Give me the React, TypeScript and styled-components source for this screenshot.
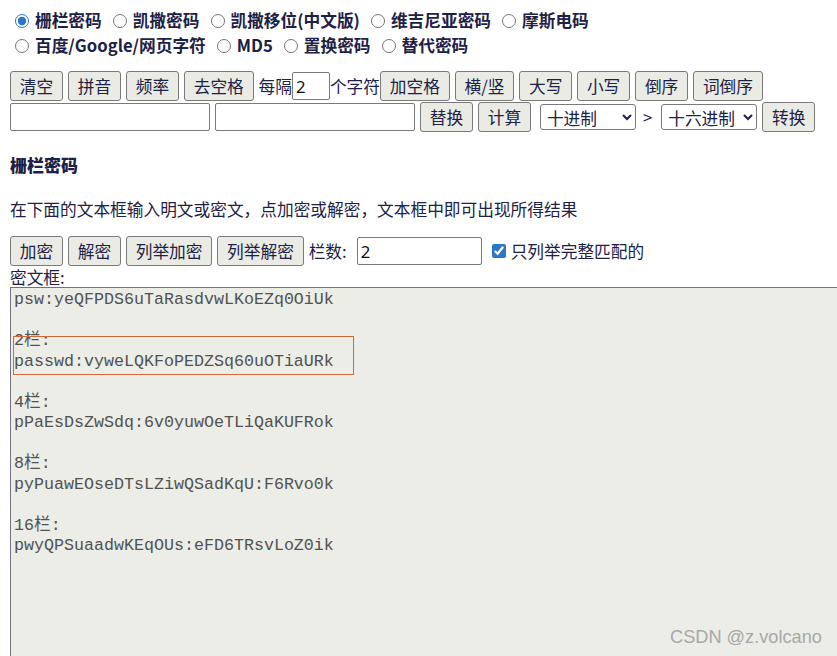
import React, { useState } from 'react';
import styled, { createGlobalStyle } from 'styled-components';

const GlobalStyle = createGlobalStyle`
  html, body {
    margin: 0;
    padding: 0;
    overflow: hidden;
    background: #ffffff;
  }
  body {
    font-family: "Noto Sans CJK SC", "Noto Sans", sans-serif;
    font-size: 16.7px;
    color: #1d2145;
  }
`;

const Page = styled.div`
  padding: 8px 0 0 10px;
  width: 880px;
`;

const RadioGroup = styled.div`
  display: flex;
  flex-wrap: wrap;
  width: 640px;
  line-height: 25px;
`;

const RadioLabel = styled.label`
  display: inline-flex;
  align-items: center;
  font-weight: bold;
  margin-right: 6px;
  white-space: nowrap;
  input {
    margin: 0 6px 0 5px;
    width: 14px;
    height: 14px;
    accent-color: #2a76c9;
  }
`;

const Toolbar = styled.div<{ $top: number }>`
  display: flex;
  align-items: center;
  gap: 5px;
  margin-top: ${(p) => p.$top}px;
  height: 30px;
`;

const Button = styled.button`
  height: 30px;
  padding: 0 8.8px;
  border: 1px solid #7a7a7a;
  border-radius: 3px;
  background: #e9ebe4;
  color: #1d2145;
  font-family: inherit;
  font-size: 16.7px;
  line-height: 1;
  white-space: nowrap;
  cursor: pointer;
`;

const Group = styled.span<{ $left?: number }>`
  display: inline-flex;
  align-items: center;
  white-space: nowrap;
  margin-left: ${(p) => p.$left ?? 0}px;
`;

const TextInput = styled.input<{ $w: number }>`
  box-sizing: border-box;
  width: ${(p) => p.$w}px;
  height: 28px;
  padding: 0 3px;
  border: 1px solid #7a7a7a;
  border-radius: 2px;
  font-family: "Noto Sans", "Noto Sans CJK SC", sans-serif;
  font-size: 16.7px;
  color: #111;
  background: #fff;
`;

const Select = styled.select`
  box-sizing: border-box;
  width: 96px;
  height: 26px;
  border: 1px solid #7a7a7a;
  border-radius: 3px;
  font-family: inherit;
  font-size: 16.7px;
  color: #1d2145;
  background: #fff;
  padding: 0 2px;
`;

const Arrow = styled.span`
  margin: 0 9px 0 7px;
`;

const Heading = styled.h3`
  margin: 21px 0 0;
  font-size: 17px;
  line-height: 24px;
  font-weight: 900;
`;

const Para = styled.p`
  margin: 20px 0 0;
  line-height: 24px;
`;

const Caption = styled.span`
  padding-right: 5px;
`;

const CheckLabel = styled.label`
  display: inline-flex;
  align-items: center;
  white-space: nowrap;
  input {
    margin: 0 5px 0 5px;
    width: 14px;
    height: 14px;
    accent-color: #2a76c9;
  }
`;

const FieldLabel = styled.div`
  margin-top: 1px;
  line-height: 20px;
`;

const Output = styled.div`
  position: relative;
  box-sizing: border-box;
  width: 870px;
  height: 400px;
  border: 1px solid #7a6f7e;
  background: #ebede6;
  padding: 2px 3px;
  font-family: "Liberation Mono", "Noto Sans CJK SC", monospace;
  font-size: 16.67px;
  line-height: 20.5px;
  color: #525252;
  white-space: pre;
`;

const Highlight = styled.div`
  position: absolute;
  left: 2px;
  top: 48px;
  width: 341px;
  height: 39px;
  box-sizing: border-box;
  border: 1px solid #d4683c;
  pointer-events: none;
`;

const Watermark = styled.div`
  position: absolute;
  left: 659px;
  top: 339px;
  font-family: "Liberation Sans", "Noto Sans", sans-serif;
  font-size: 18.2px;
  color: #a8a8a8;
  white-space: nowrap;
`;

const ciphers = [
  '栅栏密码',
  '凯撒密码',
  '凯撒移位(中文版)',
  '维吉尼亚密码',
  '摩斯电码',
  '百度/Google/网页字符',
  'MD5',
  '置换密码',
  '替代密码',
];

const result = [
  'psw:yeQFPDS6uTaRasdvwLKoEZq0OiUk',
  '',
  '2栏:',
  'passwd:vyweLQKFoPEDZSq60uOTiaURk',
  '',
  '4栏:',
  'pPaEsDsZwSdq:6v0yuwOeTLiQaKUFRok',
  '',
  '8栏:',
  'pyPuawEOseDTsLZiwQSadKqU:F6Rvo0k',
  '',
  '16栏:',
  'pwyQPSuaadwKEqOUs:eFD6TRsvLoZ0ik',
].join('\n');

export default function App(): React.ReactElement {
  const [cipher, setCipher] = useState('栅栏密码');
  const [onlyFull, setOnlyFull] = useState(true);

  return (
    <>
      <GlobalStyle />
      <Page>
        <RadioGroup>
          {ciphers.map((c) => (
            <RadioLabel key={c}>
              <input
                type="radio"
                name="cipher"
                checked={cipher === c}
                onChange={() => setCipher(c)}
              />
              {c}
            </RadioLabel>
          ))}
        </RadioGroup>

        <Toolbar $top={13}>
          <Button>清空</Button>
          <Button>拼音</Button>
          <Button>频率</Button>
          <Button>去空格</Button>
          <Group>
            每隔
            <TextInput $w={38} defaultValue="2" />
            个字符
            <Button>加空格</Button>
          </Group>
          <Button>横/竖</Button>
          <Button>大写</Button>
          <Button>小写</Button>
          <Button>倒序</Button>
          <Button>词倒序</Button>
        </Toolbar>

        <Toolbar $top={1}>
          <TextInput $w={200} />
          <TextInput $w={200} />
          <Button>替换</Button>
          <Button>计算</Button>
          <Group $left={4}>
            <Select defaultValue="10">
              <option value="10">十进制</option>
              <option value="16">十六进制</option>
            </Select>
            <Arrow>&gt;</Arrow>
            <Select defaultValue="16">
              <option value="10">十进制</option>
              <option value="16">十六进制</option>
            </Select>
          </Group>
          <Button>转换</Button>
        </Toolbar>

        <Heading>栅栏密码</Heading>
        <Para>在下面的文本框输入明文或密文，点加密或解密，文本框中即可出现所得结果</Para>

        <Toolbar $top={15}>
          <Button>加密</Button>
          <Button>解密</Button>
          <Button>列举加密</Button>
          <Button>列举解密</Button>
          <Caption>栏数:</Caption>
          <TextInput $w={125} defaultValue="2" />
          <CheckLabel>
            <input
              type="checkbox"
              checked={onlyFull}
              onChange={(e) => setOnlyFull(e.target.checked)}
            />
            只列举完整匹配的
          </CheckLabel>
        </Toolbar>

        <FieldLabel>密文框:</FieldLabel>
        <Output>
          {result}
          <Highlight />
          <Watermark>CSDN @z.volcano</Watermark>
        </Output>
      </Page>
    </>
  );
}
